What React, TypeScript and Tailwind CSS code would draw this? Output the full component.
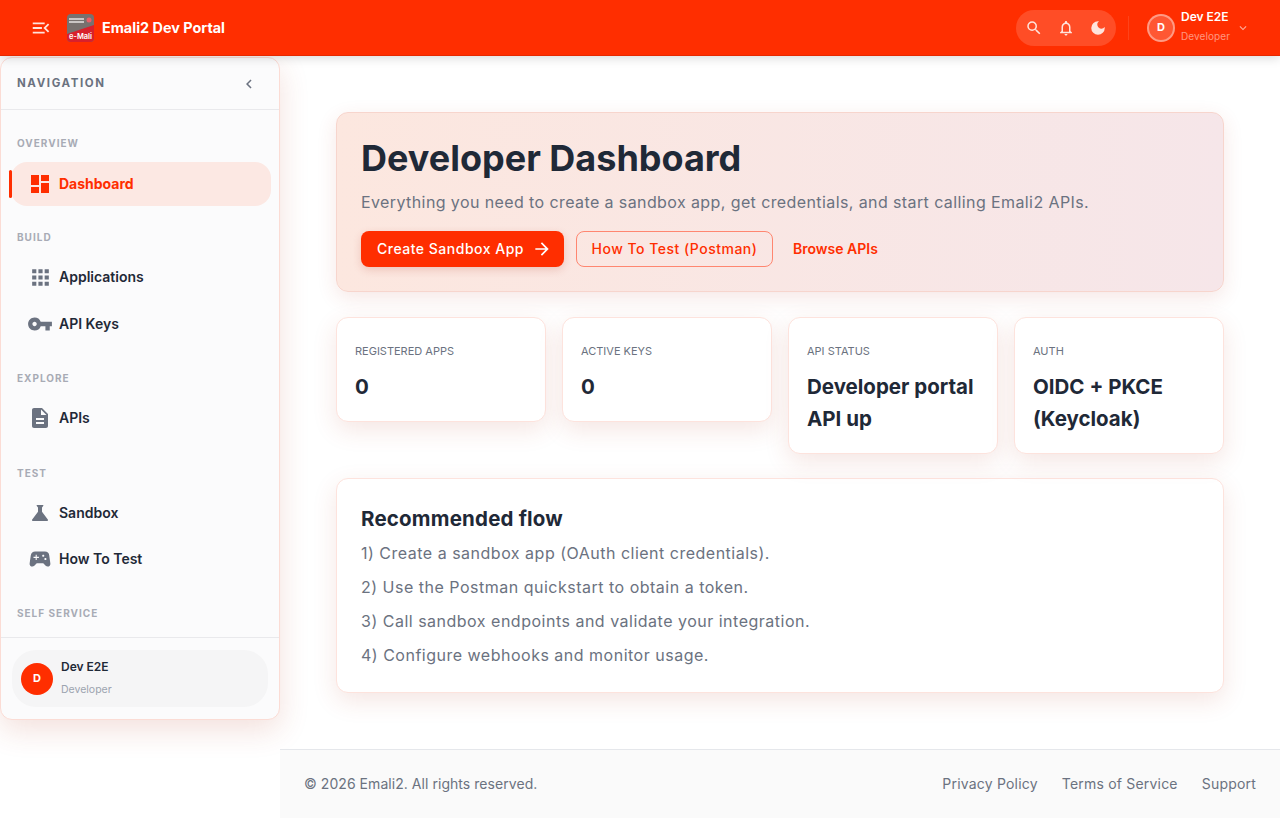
import type { ReactNode } from "react";
import {
  MdApps,
  MdArrowForward,
  MdChevronLeft,
  MdDarkMode,
  MdDashboard,
  MdDescription,
  MdExpandMore,
  MdMenuOpen,
  MdNotificationsNone,
  MdScience,
  MdSearch,
  MdSportsEsports,
  MdVpnKey,
} from "react-icons/md";

const font = "font-['Inter','Noto_Sans',sans-serif]";

function Logo() {
  return (
    <svg width="27" height="28" viewBox="0 0 27 28" className="shrink-0">
      <rect width="27" height="28" rx="4" fill="#77716f" />
      <path d="M0 20 L27 11 V24 a4 4 0 0 1 -4 4 H4 a4 4 0 0 1 -4 -4 Z" fill="#d8202c" />
      <rect x="2" y="4" width="15" height="2" fill="#c9c6c5" />
      <rect x="2" y="7" width="15" height="2" fill="#c9c6c5" />
      <circle cx="22" cy="6" r="2.5" fill="#e8606a" />
      <text x="13.5" y="25" textAnchor="middle" fontSize="7.5" fontWeight="600" fill="#fff" fontFamily="Inter, sans-serif">
        e-Mali
      </text>
    </svg>
  );
}

function Header() {
  return (
    <header className="h-14 shrink-0 bg-[#ff2e00] border-b border-[#e62900] flex items-center pl-[30px] pr-[30px] shadow-[0_2px_10px_rgba(0,0,0,0.15)] relative z-20">
      <MdMenuOpen className="text-[#ffe4dd] mr-[15px]" size={22} />
      <Logo />
      <span className="ml-2 text-[14.4px] font-bold text-white">Emali2 Dev Portal</span>
      <div className="ml-auto flex items-center">
        <div className="h-9 w-[100px] rounded-full bg-white/15 flex items-center justify-between px-[9px] text-[#ffe4dd]">
          <MdSearch size={18} />
          <MdNotificationsNone size={18} />
          <MdDarkMode size={18} />
        </div>
        <div className="w-px h-6 bg-white/10 ml-[12px] mr-[18px]" />
        <div className="w-7 h-7 rounded-full bg-white/20 border-2 border-white/40 flex items-center justify-center text-white text-[11px] font-bold">
          D
        </div>
        <div className="ml-[6px] w-[52px] -mt-1">
          <div className="text-xs font-semibold text-white leading-[18px]">Dev E2E</div>
          <div className="text-[10px] text-white/50 leading-[15px] mt-[3px] tracking-[0.1px]">Developer</div>
        </div>
        <MdExpandMore className="text-white/60 ml-[3px]" size={14} />
      </div>
    </header>
  );
}

function SectionLabel({ children, className }: { children: ReactNode; className: string }) {
  return (
    <div className={`text-[10px] leading-[14px] font-bold tracking-[1px] text-[#a8abb5] pl-4 ${className}`}>
      {children}
    </div>
  );
}

function NavItem({ icon, label, active }: { icon: ReactNode; label: string; active?: boolean }) {
  return (
    <div className="relative h-11 flex items-center">
      {active && <div className="absolute left-2 top-2 w-[3px] h-7 rounded-sm bg-[#ff2e00]" />}
      <div
        className={`ml-[10px] mr-2 w-full h-11 rounded-2xl flex items-center pl-[18px] text-sm ${
          active ? "bg-[#fce8e3] text-[#ff2e00] font-bold" : "text-[#1f2937] font-semibold"
        }`}
      >
        <span
          className={`w-[22px] flex justify-center mr-[8px] [&>svg]:shrink-0 ${
            active ? "text-[#ff2e00]" : "text-[#6b7280]"
          }`}
        >
          {icon}
        </span>
        {label}
      </div>
    </div>
  );
}

function Sidebar() {
  return (
    <aside className="w-[280px] h-[663px] mt-px shrink-0 bg-[#fbfbfc] border border-[#fbdcd5] rounded-xl shadow-[0_10px_30px_rgba(180,60,40,0.16)] flex flex-col overflow-hidden">
      <div className="h-[52px] shrink-0 border-b border-[#e9e9ec] flex items-center justify-between pl-4 pr-[21px]">
        <span className="text-[11.5px] font-bold tracking-[1.6px] text-[#6b7280]">NAVIGATION</span>
        <MdChevronLeft className="text-[#6b7280]" size={18} />
      </div>
      <div className="flex-1 pt-[26px]">
        <SectionLabel className="mb-3">OVERVIEW</SectionLabel>
        <NavItem active icon={<MdDashboard size={24} />} label="Dashboard" />
        <SectionLabel className="mt-6 mb-[11px]">BUILD</SectionLabel>
        <NavItem icon={<MdApps size={25} />} label="Applications" />
        <div className="h-[3px]" />
        <NavItem icon={<MdVpnKey size={26} />} label="API Keys" />
        <SectionLabel className="mt-[25px] mb-[11px]">EXPLORE</SectionLabel>
        <NavItem icon={<MdDescription size={24} />} label="APIs" />
        <SectionLabel className="mt-[26px] mb-[11px]">TEST</SectionLabel>
        <NavItem icon={<MdScience size={24} />} label="Sandbox" />
        <div className="h-[2px]" />
        <NavItem icon={<MdSportsEsports size={26} />} label="How To Test" />
        <SectionLabel className="mt-[25px]">SELF SERVICE</SectionLabel>
      </div>
      <div className="h-[82px] shrink-0 border-t border-[#e9e9ec] pt-3 px-[11px]">
        <div className="h-[57px] rounded-3xl bg-[#f5f5f6] flex items-center pl-[9px]">
          <div className="w-8 h-8 rounded-full bg-[#ff2e00] text-white text-[11px] font-bold flex items-center justify-center">
            D
          </div>
          <div className="ml-2 -mt-[2px]">
            <div className="text-xs font-semibold text-[#1f2937] leading-[18px]">Dev E2E</div>
            <div className="text-[10.5px] text-[#9ca3af] leading-[16px] mt-[6px]">Developer</div>
          </div>
        </div>
      </div>
    </aside>
  );
}

function StatCard({ label, value }: { label: string; value: ReactNode }) {
  return (
    <div className="self-start bg-white border border-[#fde3dd] rounded-xl shadow-[0_8px_24px_rgba(180,60,40,0.13)] px-[18px] pt-6 pb-[18px]">
      <div className="text-[11px] leading-[18px] text-[#6b7280]">{label}</div>
      <div className="mt-[11px] text-[20.5px] leading-8 font-bold text-[#1f2937]">{value}</div>
    </div>
  );
}

function Hero() {
  return (
    <section className="h-[180px] rounded-xl border border-[#f7d5cd] bg-gradient-to-r from-[#fce7df] to-[#f6e6e9] shadow-[0_6px_20px_rgba(180,60,40,0.12)] px-6 pt-[23px]">
      <h1 className="text-4xl leading-[44px] font-bold text-[#1f2937]">Developer Dashboard</h1>
      <p className="mt-[10px] text-base leading-6 text-[#6b7280] tracking-[0.4px]">
        Everything you need to create a sandbox app, get credentials, and start calling Emali2 APIs.
      </p>
      <div className="mt-[17px] flex items-center">
        <button className="h-9 w-[203px] rounded-lg bg-[#ff2e00] text-white text-sm font-medium tracking-[0.5px] flex items-center pl-4 gap-2 shadow-[0_3px_8px_rgba(180,60,40,0.2)]">
          Create Sandbox App
          <MdArrowForward size={20} />
        </button>
        <button className="ml-3 h-9 w-[197px] rounded-lg border border-[#ff8670] text-[#ff2e00] text-sm font-medium tracking-[0.5px]">
          How To Test (Postman)
        </button>
        <button className="ml-5 text-[#ff2e00] text-sm font-semibold">Browse APIs</button>
      </div>
    </section>
  );
}

function Flow() {
  const steps = [
    "1) Create a sandbox app (OAuth client credentials).",
    "2) Use the Postman quickstart to obtain a token.",
    "3) Call sandbox endpoints and validate your integration.",
    "4) Configure webhooks and monitor usage.",
  ];
  return (
    <section className="mt-6 h-[215px] bg-white border border-[#fde3dd] rounded-xl shadow-[0_8px_24px_rgba(180,60,40,0.13)] px-6 pt-[24px]">
      <h2 className="text-[20.5px] leading-8 font-bold text-[#1f2937] tracking-[0.2px]">Recommended flow</h2>
      <div className="mt-px">
        {steps.map((step) => (
          <p key={step} className="text-base leading-[34px] text-[#6b7280] tracking-[0.5px]">
            {step}
          </p>
        ))}
      </div>
    </section>
  );
}

function Footer() {
  return (
    <footer className="h-[69px] shrink-0 bg-[#fafafa] border-t border-[#e5e7eb] flex items-center justify-between px-6 text-sm text-[#6b7280]">
      <span className="tracking-[0.05px]">© 2026 Emali2. All rights reserved.</span>
      <div className="flex gap-6 tracking-[0.2px]">
        <span>Privacy Policy</span>
        <span>Terms of Service</span>
        <span>Support</span>
      </div>
    </footer>
  );
}

export default function App() {
  return (
    <div className={`${font} h-[818px] w-[1280px] overflow-hidden flex flex-col bg-white`}>
      <Header />
      <div className="flex flex-1 min-h-0">
        <Sidebar />
        <div className="flex-1 flex flex-col min-w-0">
          <main className="flex-1 px-14 pt-14">
            <Hero />
            <div className="mt-[25px] grid grid-cols-4 gap-4">
              <StatCard label="REGISTERED APPS" value="0" />
              <StatCard label="ACTIVE KEYS" value="0" />
              <StatCard label="API STATUS" value="Developer portal API up" />
              <StatCard label="AUTH" value="OIDC + PKCE (Keycloak)" />
            </div>
            <Flow />
          </main>
          <Footer />
        </div>
      </div>
    </div>
  );
}
